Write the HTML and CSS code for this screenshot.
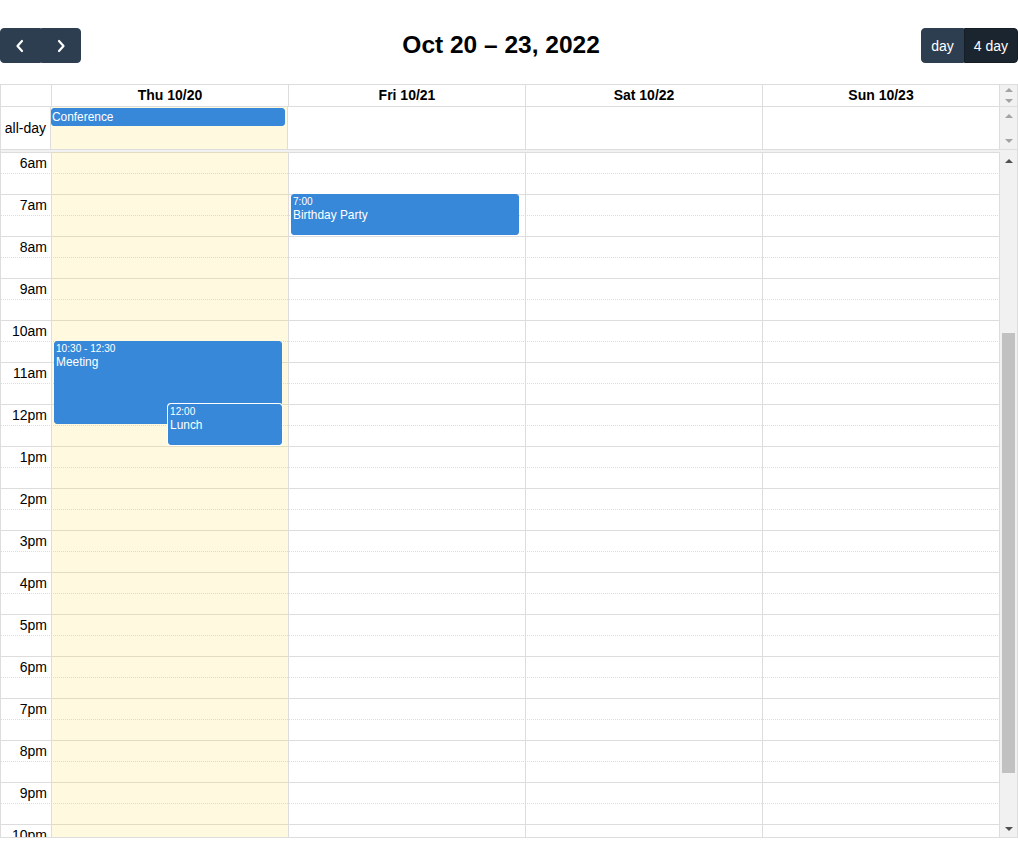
FILE: index.html
```html
<!DOCTYPE html>
<html lang="en">
<head>
<meta charset="utf-8">
<title>Calendar</title>
<link rel="stylesheet" href="styles.css">
</head>
<body>
<div class="cal">
  <div class="toolbar">
    <div class="btn-group">
      <button class="btn btn-icon btn-first" aria-label="prev"><svg width="10" height="14" viewBox="0 0 10 14"><polyline points="7,2 2.5,7 7,12" fill="none" stroke="#fff" stroke-width="2.2" stroke-linecap="round" stroke-linejoin="round"/></svg></button>
      <button class="btn btn-icon btn-last" aria-label="next"><svg width="10" height="14" viewBox="0 0 10 14"><polyline points="3,2 7.5,7 3,12" fill="none" stroke="#fff" stroke-width="2.2" stroke-linecap="round" stroke-linejoin="round"/></svg></button>
    </div>
    <h2 class="title">Oct 20 – 23, 2022</h2>
    <div class="btn-group">
      <button class="btn btn-first">day</button>
      <button class="btn btn-last active">4 day</button>
    </div>
  </div>

  <div class="grid">
    <div class="sec sec-head">
      <div class="sec-main">
        <div class="row">
          <div class="axis"></div>
          <div class="day head-cell">Thu 10/20</div>
          <div class="day head-cell">Fri 10/21</div>
          <div class="day head-cell">Sat 10/22</div>
          <div class="day head-cell">Sun 10/23</div>
        </div>
      </div>
      <div class="sbar">
        <div class="arrow"><span class="tri-up"></span></div>
        <div class="arrow"><span class="tri-down"></span></div>
      </div>
    </div>
    <div class="sec sec-allday">
      <div class="sec-main">
        <div class="row">
          <div class="axis allday-label">all-day</div>
          <div class="day today">
            <div class="allday-event">Conference</div>
          </div>
          <div class="day"></div>
          <div class="day"></div>
          <div class="day"></div>
        </div>
      </div>
      <div class="sbar">
        <div class="arrow"><span class="tri-up"></span></div>
        <div class="arrow"><span class="tri-down"></span></div>
      </div>
    </div>
    <div class="divider"></div>
    <div class="sec sec-body">
      <div class="sec-main body-scroller">
        <div class="body-inner">
          <div class="slots">
            <div class="slot"><div class="slot-label">12am</div></div>
            <div class="slot minor"><div class="slot-label"></div></div>
            <div class="slot"><div class="slot-label">1am</div></div>
            <div class="slot minor"><div class="slot-label"></div></div>
            <div class="slot"><div class="slot-label">2am</div></div>
            <div class="slot minor"><div class="slot-label"></div></div>
            <div class="slot"><div class="slot-label">3am</div></div>
            <div class="slot minor"><div class="slot-label"></div></div>
            <div class="slot"><div class="slot-label">4am</div></div>
            <div class="slot minor"><div class="slot-label"></div></div>
            <div class="slot"><div class="slot-label">5am</div></div>
            <div class="slot minor"><div class="slot-label"></div></div>
            <div class="slot"><div class="slot-label">6am</div></div>
            <div class="slot minor"><div class="slot-label"></div></div>
            <div class="slot"><div class="slot-label">7am</div></div>
            <div class="slot minor"><div class="slot-label"></div></div>
            <div class="slot"><div class="slot-label">8am</div></div>
            <div class="slot minor"><div class="slot-label"></div></div>
            <div class="slot"><div class="slot-label">9am</div></div>
            <div class="slot minor"><div class="slot-label"></div></div>
            <div class="slot"><div class="slot-label">10am</div></div>
            <div class="slot minor"><div class="slot-label"></div></div>
            <div class="slot"><div class="slot-label">11am</div></div>
            <div class="slot minor"><div class="slot-label"></div></div>
            <div class="slot"><div class="slot-label">12pm</div></div>
            <div class="slot minor"><div class="slot-label"></div></div>
            <div class="slot"><div class="slot-label">1pm</div></div>
            <div class="slot minor"><div class="slot-label"></div></div>
            <div class="slot"><div class="slot-label">2pm</div></div>
            <div class="slot minor"><div class="slot-label"></div></div>
            <div class="slot"><div class="slot-label">3pm</div></div>
            <div class="slot minor"><div class="slot-label"></div></div>
            <div class="slot"><div class="slot-label">4pm</div></div>
            <div class="slot minor"><div class="slot-label"></div></div>
            <div class="slot"><div class="slot-label">5pm</div></div>
            <div class="slot minor"><div class="slot-label"></div></div>
            <div class="slot"><div class="slot-label">6pm</div></div>
            <div class="slot minor"><div class="slot-label"></div></div>
            <div class="slot"><div class="slot-label">7pm</div></div>
            <div class="slot minor"><div class="slot-label"></div></div>
            <div class="slot"><div class="slot-label">8pm</div></div>
            <div class="slot minor"><div class="slot-label"></div></div>
            <div class="slot"><div class="slot-label">9pm</div></div>
            <div class="slot minor"><div class="slot-label"></div></div>
            <div class="slot"><div class="slot-label">10pm</div></div>
            <div class="slot minor"><div class="slot-label"></div></div>
            <div class="slot"><div class="slot-label">11pm</div></div>
            <div class="slot minor"><div class="slot-label"></div></div>
          </div>
          <div class="cols">
            <div class="axis"></div>
            <div class="day col today">
              <div class="col-events">
                <div class="event" style="top:441px;height:83px;left:0;right:0">
                  <div class="ev-time">10:30 - 12:30</div>
                  <div class="ev-title">Meeting</div>
                </div>
                <div class="event event-inset" style="top:504px;height:41px;left:50%;right:0">
                  <div class="ev-time">12:00</div>
                  <div class="ev-title">Lunch</div>
                </div>
              </div>
            </div>
            <div class="day col">
              <div class="col-events">
                <div class="event" style="top:294px;height:41px;left:0;right:0">
                  <div class="ev-time">7:00</div>
                  <div class="ev-title">Birthday Party</div>
                </div>
              </div>
            </div>
            <div class="day col"></div>
            <div class="day col"></div>
          </div>
        </div>
      </div>
      <div class="sbar">
        <div class="arrow"><span class="tri-up dark"></span></div>
        <div class="track"><div class="thumb"></div></div>
        <div class="arrow"><span class="tri-down dark"></span></div>
      </div>
    </div>
  </div>
</div>
<script src="script.js"></script>
</body>
</html>
```

FILE: styles.css
```css
html, body {
  margin: 0;
  padding: 0;
  background: #fff;
}
body {
  font-family: "Liberation Sans", Arial, Helvetica, sans-serif;
  font-size: 14px;
  color: #000;
}
.cal {
  padding-top: 28px;
}
.toolbar {
  display: flex;
  justify-content: space-between;
  align-items: center;
  height: 35px;
  margin-bottom: 21px;
}
.title {
  margin: 0;
  font-size: 24.5px;
  font-weight: bold;
  line-height: 1;
}
.btn-group {
  display: flex;
}
.btn {
  box-sizing: border-box;
  height: 35px;
  margin: 0;
  padding: 0 9px;
  border: 1px solid #2c3e50;
  background: #2c3e50;
  color: #fff;
  font-family: "Liberation Sans", Arial, sans-serif;
  font-size: 14px;
  line-height: 1;
  border-radius: 0;
}
.btn.active {
  background: #1a252f;
  border-color: #151e27;
}
.btn-icon {
  width: 40.5px;
  display: flex;
  align-items: center;
  justify-content: center;
  padding: 0;
}
.btn-first {
  border-radius: 4px 0 0 4px;
}
.btn-last {
  border-radius: 0 4px 4px 0;
}

.grid {
  border: 1px solid #ddd;
}
.sec {
  display: flex;
}
.sec-main {
  flex: 1 1 0;
  min-width: 0;
  overflow: hidden;
}
.sbar {
  flex: none;
  width: 17px;
  background: #f1f1f1;
  display: flex;
  flex-direction: column;
  justify-content: space-between;
}
.arrow {
  flex: 0 1 17px;
  min-height: 0;
  display: flex;
  align-items: center;
  justify-content: center;
}
.tri-up {
  width: 0;
  height: 0;
  border-left: 4px solid transparent;
  border-right: 4px solid transparent;
  border-bottom: 4px solid #a3a3a3;
}
.tri-down {
  width: 0;
  height: 0;
  border-left: 4px solid transparent;
  border-right: 4px solid transparent;
  border-top: 4px solid #a3a3a3;
}
.tri-up.dark {
  border-bottom-color: #505050;
}
.tri-down.dark {
  border-top-color: #505050;
}
.track {
  flex: 1 1 auto;
}
.thumb {
  margin: 164px 2px 0;
  height: 440px;
  background: #c1c1c1;
}
.row {
  display: flex;
  height: 100%;
}
.axis {
  flex: none;
  width: 50px;
  border-right: 1px solid #ddd;
}
.day {
  flex: 1 1 0;
  min-width: 0;
  border-right: 1px solid #ddd;
}
.today {
  background: rgba(255, 220, 40, 0.15);
}
.sec-head {
  height: 21px;
  border-bottom: 1px solid #ddd;
}
.head-cell {
  text-align: center;
  font-weight: bold;
  line-height: 21px;
}
.sec-allday {
  height: 42px;
  border-bottom: 1px solid #ddd;
}
.allday-label {
  display: flex;
  align-items: center;
  justify-content: flex-end;
  box-sizing: border-box;
  padding-right: 4px;
}
.allday-event {
  margin: 1px 2px 0 0;
  height: 18px;
  box-sizing: border-box;
  border: 1px solid #3788d8;
  background: #3788d8;
  border-radius: 3px;
  color: #fff;
  font-size: 11.9px;
  line-height: 17px;
  padding: 0;
  white-space: nowrap;
  overflow: hidden;
}
.divider {
  height: 2px;
  background: rgba(208, 208, 208, 0.3);
}
.sec-body {
  height: 685px;
}
.body-inner {
  position: relative;
}
.slot {
  box-sizing: border-box;
  height: 21px;
  border-top: 1px solid #ddd;
}
.slot.minor {
  border-top-style: dotted;
}
.slot-label {
  box-sizing: border-box;
  width: 51px;
  padding-right: 5px;
  text-align: right;
  line-height: 20px;
  white-space: nowrap;
}
.cols {
  position: absolute;
  top: 0;
  left: 0;
  right: 0;
  bottom: 0;
  display: flex;
}
.col {
  position: relative;
}
.col-events {
  position: relative;
  height: 100%;
  margin: 0 2.5% 0 2px;
}
.event {
  position: absolute;
  box-sizing: border-box;
  border: 1px solid #3788d8;
  background: #3788d8;
  border-radius: 3px;
  color: #fff;
  padding: 1px 1px 0;
  overflow: hidden;
  font-size: 11.9px;
}
.event-inset {
  box-shadow: 0 0 0 1px #fff;
}
.ev-time {
  font-size: 10.1px;
  line-height: 11px;
  margin-bottom: 1px;
  white-space: nowrap;
}
.ev-title {
  line-height: 14px;
  white-space: nowrap;
}
```

FILE: script.js
```js
document.querySelector('.body-scroller').scrollTop = 252;
```
